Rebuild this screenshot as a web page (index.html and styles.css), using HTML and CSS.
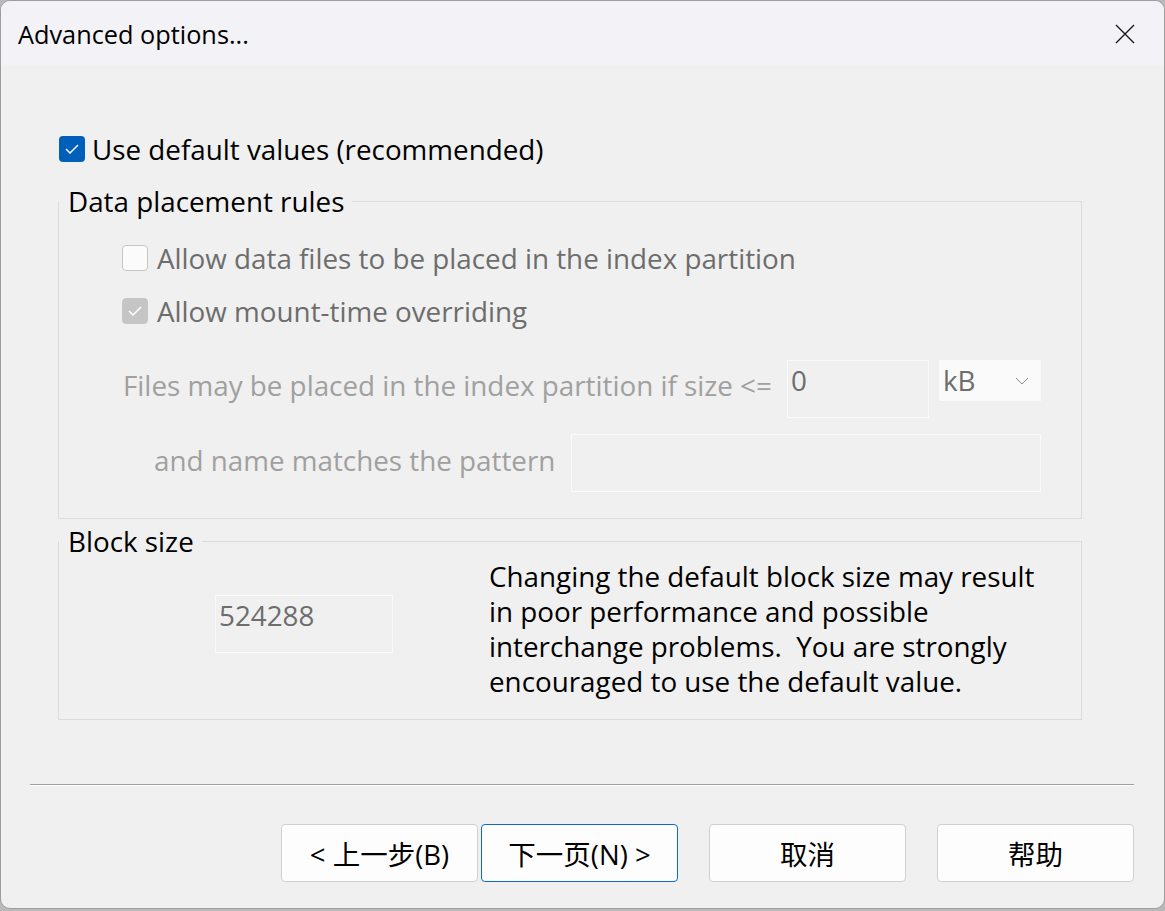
FILE: index.html
```html
<!DOCTYPE html>
<html lang="en">
<head>
    <meta charset="UTF-8">
    <title>Advanced options...</title>
    <link rel="stylesheet" href="styles.css">
</head>
<body>
    <div class="window">
        <div class="titlebar">
            <span class="title">Advanced options...</span>
            <svg class="close" width="20" height="20" viewBox="0 0 20 20">
                <path d="M1 1 L19 19 M19 1 L1 19" stroke="#1a1a1a" stroke-width="1.4" fill="none"/>
            </svg>
        </div>

        <div class="content">
            <label class="check-row main-check">
                <span class="box checked">
                    <svg width="14" height="10" viewBox="0 0 14 10"><path d="M1 5 L5 9 L13 1" stroke="#fff" stroke-width="1.5" fill="none"/></svg>
                </span>
                Use default values (recommended)
            </label>

            <fieldset class="group placement">
                <legend>Data placement rules</legend>

                <div class="check-row sub-check first">
                    <span class="box empty"></span>
                    Allow data files to be placed in the index partition
                </div>
                <div class="check-row sub-check">
                    <span class="box dimmed">
                        <svg width="14" height="10" viewBox="0 0 14 10"><path d="M1 5 L5 9 L13 1" stroke="#fff" stroke-width="1.5" fill="none"/></svg>
                    </span>
                    Allow mount-time overriding
                </div>

                <div class="field-row size-row">
                    <span class="field-label size-label">Files may be placed in the index partition if size &lt;=</span>
                    <div class="edit size-edit">0</div>
                    <div class="combo">
                        kB
                        <svg width="14" height="8" viewBox="0 0 14 8"><path d="M1 1 L7 7 L13 1" stroke="#8a8a8a" stroke-width="1" fill="none"/></svg>
                    </div>
                </div>

                <div class="field-row pattern-row">
                    <span class="field-label pattern-label">and name matches the pattern</span>
                    <div class="edit pattern-edit"></div>
                </div>
            </fieldset>

            <fieldset class="group block">
                <legend>Block size</legend>
                <div class="block-body">
                    <div class="edit block-edit">524288</div>
                    <p class="note">Changing the default block size may result in poor performance and possible interchange problems.&nbsp; You are strongly encouraged to use the default value.</p>
                </div>
            </fieldset>
        </div>

        <div class="footer">
            <div class="separator"></div>
            <div class="buttons">
                <div class="pair">
                    <button class="btn">&lt; 上一步(B)</button>
                    <button class="btn default">下一页(N) &gt;</button>
                </div>
                <button class="btn">取消</button>
                <button class="btn">帮助</button>
            </div>
        </div>
    </div>
</body>
</html>
```

FILE: styles.css
```css
html, body {
    margin: 0;
    padding: 0;
    background-color: #b9b9b9;
}
body {
    font-family: "Open Sans", "Noto Sans CJK SC", sans-serif;
    font-size: 27.8px;
    color: #000;
}
.window {
    width: 1163px;
    height: 907px;
    border: 1px solid #9d9d9d;
    border-radius: 10px;
    background-color: #f0f0f0;
    overflow: hidden;
    display: flex;
    flex-direction: column;
}
.titlebar {
    height: 65px;
    background-color: #f3f3f7;
    display: flex;
    align-items: center;
    justify-content: space-between;
    padding: 0 29px 0 17px;
    flex-shrink: 0;
}
.title {
    font-size: 25.3px;
}
.close {
    display: block;
}

.content {
    padding: 66px 0 0 57px;
    flex: 1;
}
.check-row {
    display: flex;
    align-items: center;
    height: 34px;
    line-height: 34px;
    white-space: nowrap;
}
.box {
    width: 24px;
    height: 24px;
    border-radius: 4px;
    margin-right: 9px;
    display: flex;
    align-items: center;
    justify-content: center;
    flex-shrink: 0;
}
.box.checked {
    width: 26px;
    height: 26px;
    background-color: #005fb8;
    margin-right: 7px;
}
.box.empty {
    background-color: #fbfbfb;
    border: 1px solid #c6c6c6;
}
.box.dimmed {
    background-color: #c5c5c5;
    border: 1px solid #c5c5c5;
}
.main-check {
    margin-left: 1px;
}

.group {
    width: 1022px;
    margin: 0;
    padding: 0;
    border: 1px solid #dcdcdc;
    min-width: 0;
}
.group legend {
    line-height: 34px;
    padding: 0 8px 0 9px;
    margin-left: 0;
}
.placement {
    margin-top: 18px;
    padding-bottom: 26px;
}
.sub-check {
    margin-left: 63px;
    color: #6d6d6d;
}
.sub-check.first {
    margin-top: 23px;
}
.sub-check + .sub-check {
    margin-top: 19px;
}

.field-row {
    display: flex;
    align-items: flex-start;
}
.field-label {
    color: #a0a0a0;
    line-height: 34px;
    white-space: nowrap;
    flex-shrink: 0;
}
.size-row {
    margin-top: 32px;
    padding-left: 64px;
}
.size-label {
    margin-top: 8px;
    width: 654px;
    margin-right: 10px;
}
.pattern-row {
    margin-top: 16px;
    padding-left: 95px;
}
.pattern-label {
    margin-top: 9px;
    width: 397px;
    margin-right: 20px;
}
.edit {
    border: 1px solid #fafafa;
    height: 56px;
    padding: 0 3px;
    line-height: 38px;
    color: #6d6d6d;
    box-sizing: content-box;
    flex-shrink: 0;
}
.size-edit {
    width: 134px;
    margin-right: 10px;
}
.pattern-edit {
    width: 462px;
}
.combo {
    width: 98px;
    height: 41px;
    line-height: 41px;
    background-color: #fafafa;
    padding-left: 4px;
    color: #6d6d6d;
    display: flex;
    align-items: center;
    justify-content: space-between;
    flex-shrink: 0;
}
.combo svg {
    margin-right: 12px;
}

.block {
    margin-top: 5px;
    padding-bottom: 20px;
}
.block-body {
    display: flex;
    align-items: flex-start;
}
.block-edit {
    margin: 37px 0 0 156px;
    width: 170px;
}
.note {
    margin: 1px 0 0 96px;
    width: 560px;
    line-height: 35px;
}

.footer {
    padding: 0 30px 26px 29px;
}
.separator {
    border-top: 1px solid #a0a0a0;
    border-bottom: 1px solid #fff;
    margin-bottom: 38px;
}
.buttons {
    display: flex;
    justify-content: flex-end;
    gap: 31px;
}
.pair {
    display: flex;
    gap: 3px;
}
.btn {
    width: 197px;
    height: 58px;
    background-color: #fdfdfd;
    border: 1px solid #d0d0d0;
    border-radius: 4px;
    font-family: "Open Sans", "Noto Sans CJK SC", sans-serif;
    font-size: 27.5px;
    color: #000;
    padding: 0;
}
.btn.default {
    border-color: #0f6cbd;
}
```
